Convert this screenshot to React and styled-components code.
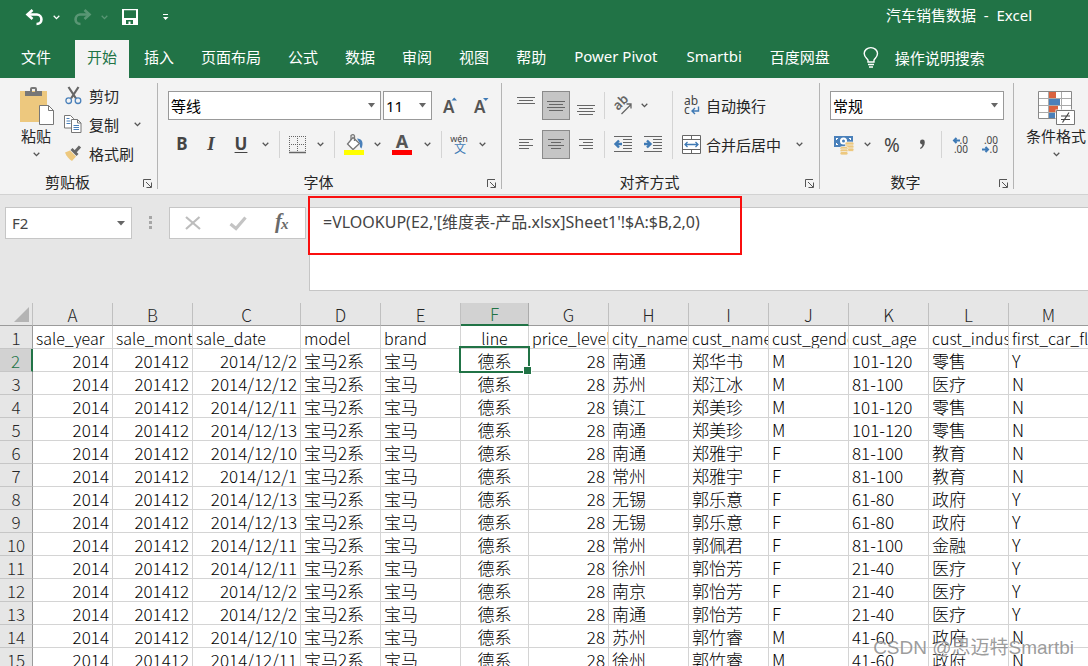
import styled, { createGlobalStyle } from "styled-components";

const GlobalStyle = createGlobalStyle`
  * {
    box-sizing: border-box;
  }
  body {
    margin: 0;
    overflow: hidden;
    background-color: #e6e6e6;
  }
  body, button, input, select, textarea {
    font-family: "Noto Sans", "Noto Sans CJK SC", sans-serif;
    font-size: 15px;
    color: #262626;
  }
  button {
    padding: 0;
    border: none;
    background: none;
  }
  svg {
    display: block;
    flex: none;
    overflow: visible;
  }
`;

const Window = styled.div`
  position: relative;
  display: flex;
  flex-direction: column;
  height: 100vh;
  overflow: hidden;
`;

/* title bar */

const TitleBar = styled.header`
  display: flex;
  align-items: center;
  justify-content: space-between;
  height: 40px;
  padding: 0 56px 8px 24px;
  background-color: #217346;
  color: white;
`;
const QuickAccess = styled.div`
  display: flex;
  align-items: center;
  padding-top: 2px;
`;
const QuickButton = styled.button`
  display: flex;
  align-items: center;
  justify-content: center;
  width: ${(props) => props.$width}px;
  height: 24px;
  color: white;
  opacity: ${(props) => (props.disabled ? 0.25 : 1)};
`;
const Title = styled.h1`
  margin: 0;
  padding-bottom: 2px;
  font-size: 15px;
  font-weight: 400;
  line-height: 20px;
`;

/* ribbon tabs */

const Tabs = styled.nav`
  display: flex;
  gap: 3px;
  height: 38px;
  padding-left: 9px;
  background-color: #217346;
`;
const Tab = styled.button`
  height: 38px;
  padding: 0 ${(props) => (props.$latin ? 13 : 12)}px 6px;
  white-space: nowrap;
  margin-right: ${(props) => (props.$file ? 9 : 0)}px;
  background-color: ${(props) => (props.$active ? "#f3f3f3" : "transparent")};
  color: ${(props) => (props.$active ? "#217346" : "white")};
`;
const TellMe = styled.button`
  display: flex;
  align-items: center;
  gap: 16px;
  padding: 0 18px 3px;
  color: white;
  white-space: nowrap;
`;

/* ribbon */

const Ribbon = styled.div`
  display: flex;
  flex: none;
  height: 117px;
  padding: 5px 0;
  border-bottom: 1px solid #d2d2d2;
  background-color: #f3f3f3;
  overflow: hidden;
`;
const Group = styled.section`
  display: flex;
  flex-direction: column;
  flex: none;
  width: ${(props) => props.$width}px;
  border-right: 1px solid #b4b4b4;
`;
const GroupBody = styled.div`
  display: flex;
  flex-direction: ${(props) => (props.$rows ? "column" : "row")};
  flex: 1;
  gap: ${(props) => (props.$rows ? 10 : 0)}px;
  padding: ${(props) => props.$padding};
`;
const GroupFooter = styled.div`
  display: flex;
  align-items: center;
  height: 16px;
  padding-right: 4px;
`;
const GroupLabel = styled.div`
  flex: 1;
  padding-top: 2px;
  line-height: 16px;
  text-align: center;
`;
const Launcher = styled.button`
  width: 10px;
  height: 10px;
  margin: 6px 0 0 8px;
`;
const Row = styled.div`
  display: flex;
  align-items: center;
  height: ${(props) => (props.$short ? 24 : 29)}px;
  gap: ${(props) => props.$gap || 0}px;
`;
const Separator = styled.div`
  flex: none;
  width: 1px;
  height: ${(props) => (props.$tall ? 68 : 27)}px;
  margin: 0 ${(props) => props.$space || 5}px;
  background-color: #d4d4d4;
`;
const Tool = styled.button`
  display: flex;
  align-items: center;
  justify-content: center;
  flex: none;
  width: ${(props) => props.$width || 28}px;
  height: 29px;
  border: 1px solid ${(props) => (props.$pressed ? "#8a8a8a" : "transparent")};
  background-color: ${(props) => (props.$pressed ? "#c5c5c5" : "transparent")};
  color: #444;
`;
const LetterTool = styled(Tool)`
  font-size: ${(props) => (props.$italic ? 19 : 17)}px;
  font-weight: 700;
  line-height: 24px;
  padding-bottom: 2px;
  font-family: ${(props) => (props.$italic ? '"Liberation Serif", serif' : '"Noto Sans", sans-serif')};
  font-style: ${(props) => (props.$italic ? "italic" : "normal")};
  text-decoration: ${(props) => (props.$underline ? "underline" : "none")};
  text-underline-offset: 2px;
`;
const PercentTool = styled(Tool)`
  font-size: 19px;
`;
const TextTool = styled.button`
  display: flex;
  align-items: center;
  gap: ${(props) => props.$gap || 0}px;
  height: 29px;
  white-space: nowrap;
`;
const BigTool = styled.button`
  display: flex;
  flex-direction: column;
  align-items: center;
  width: ${(props) => props.$width}px;
  padding-top: ${(props) => props.$top || 0}px;
  white-space: nowrap;
  line-height: 20px;
  svg:last-child {
    margin-top: 6px;
  }
`;
const ClipboardList = styled.div`
  display: flex;
  flex-direction: column;
  gap: 5px;
`;
const ToolColumn = styled.div`
  display: flex;
  flex-direction: column;
  gap: 10px;
`;
const SelectBox = styled.div`
  display: flex;
  align-items: center;
  width: ${(props) => props.$width}px;
  height: 29px;
  border: 1px solid #999;
  background-color: white;
  svg {
    margin: 0 5px 0 -12px;
    pointer-events: none;
  }
`;
const Select = styled.select`
  flex: 1;
  min-width: 0;
  height: 27px;
  padding: 0 2px;
  border: none;
  background: none;
  appearance: none;
  color: black;
`;

/* formula bar */

const FormulaBar = styled.div`
  display: flex;
  align-items: flex-start;
  flex: none;
  height: 108px;
  padding: 12px 0 0 5px;
  background-color: #e6e6e6;
`;
const NameBox = styled.div`
  display: flex;
  align-items: center;
  width: 127px;
  height: 32px;
  padding-right: 6px;
  border: 1px solid #c6c6c6;
  background-color: white;
`;
const NameInput = styled.input`
  flex: 1;
  min-width: 0;
  padding: 0 6px;
  border: none;
  background: none;
  color: #444;
`;
const Dots = styled.div`
  display: flex;
  flex-direction: column;
  gap: 2px;
  margin: 9px 17px;
  span {
    width: 3px;
    height: 3px;
    background-color: #a6a6a6;
  }
`;
const FormulaButtons = styled.div`
  display: flex;
  align-items: center;
  width: 137px;
  height: 32px;
  margin-right: 3px;
  border: 1px solid #c6c6c6;
  background-color: white;
`;
const FormulaButton = styled.button`
  display: flex;
  justify-content: center;
  width: 45px;
`;
const FormulaField = styled.div`
  position: relative;
  flex: 1;
  height: 84px;
`;
const FormulaText = styled.textarea`
  display: block;
  width: 100%;
  height: 84px;
  padding: 2px 13px;
  border: 1px solid #c6c6c6;
  border-right: none;
  background-color: white;
  color: #444;
  font-size: 16px;
  line-height: 24px;
  resize: none;
  outline: none;
`;
const Highlight = styled.div`
  position: absolute;
  top: -11px;
  left: -1px;
  width: 434px;
  height: 59px;
  border: 2px solid #fa0f0f;
  pointer-events: none;
`;

/* sheet */

const SheetArea = styled.main`
  flex: 1;
  overflow: hidden;
  background-color: white;
`;
const Sheet = styled.table`
  width: 1089px;
  table-layout: fixed;
  border-collapse: separate;
  border-spacing: 0;
  font-family: "Noto Sans CJK SC", sans-serif;
  font-weight: 300;
  color: black;
`;
const HeadCell = styled.th`
  height: 23px;
  padding: 1px 0 0;
  border-bottom: ${(props) => (props.$active ? "2px solid #217346" : "1px solid #9b9b9b")};
  border-right: 1px solid ${(props) => (props.$active ? "#ababab" : "#c0c0c0")};
  background-color: ${(props) => (props.$active ? "#d2d2d2" : "#e6e6e6")};
  color: ${(props) => (props.$active ? "#217346" : "#262626")};
  font-size: 17px;
  font-weight: 300;
  line-height: 20px;
  svg {
    margin: 0 3px 0 auto;
  }
`;
const RowHead = styled.th`
  height: 23px;
  padding: 2px 0 0;
  border-bottom: 1px solid #c6c6c6;
  border-right: ${(props) => (props.$active ? "2px solid #217346" : "1px solid #9b9b9b")};
  background-color: ${(props) => (props.$active ? "#d2d2d2" : "#e6e6e6")};
  color: ${(props) => (props.$active ? "#217346" : "#262626")};
  font-size: 17px;
  font-weight: 300;
  line-height: 20px;
`;
const Cell = styled.td`
  position: ${(props) => (props.$active ? "relative" : "static")};
  height: 23px;
  padding: 2px 3px 0;
  border-right: 1px solid #d4d4d4;
  border-bottom: 1px solid #d4d4d4;
  overflow: ${(props) => (props.$active ? "visible" : "hidden")};
  font-size: ${(props) => (props.$name ? 16 : 17)}px;
  line-height: 20px;
  text-align: ${(props) => props.$align || "left"};
  white-space: nowrap;
`;
const Cursor = styled.div`
  position: absolute;
  top: -3px;
  left: -2px;
  right: -2px;
  bottom: -2px;
  border: 2px solid #217346;
  &::after {
    content: "";
    position: absolute;
    right: -4px;
    bottom: -4px;
    width: 7px;
    height: 7px;
    border: 1px solid white;
    background-color: #217346;
  }
`;
const Watermark = styled.div`
  position: absolute;
  right: 14px;
  bottom: 5px;
  color: rgba(130, 130, 130, 0.8);
  font-family: "Liberation Sans", "Noto Sans CJK SC", sans-serif;
  font-size: 19px;
  line-height: 26px;
  text-shadow: 1px 1px 0 rgba(255, 255, 255, 0.7);
`;

/* icons */

const Chevron = ({ color = "#555" }) => (
  <svg width="7" height="5" viewBox="0 0 7 5" fill="none" stroke={color} strokeWidth="1.3">
    <path d="M.7.8 3.5 3.6 6.3.8" />
  </svg>
);

const Triangle = ({ size = 7 }) => (
  <svg width={size} height="5" viewBox="0 0 6 4" preserveAspectRatio="none" fill="#666">
    <path d="M0 0h6L3 3.5z" />
  </svg>
);

const UndoIcon = ({ flip }) => (
  <svg width="19" height="17" viewBox="0 0 19 17" fill="none" stroke="currentColor" strokeWidth="2.6">
    <g transform={flip ? "translate(19 0) scale(-1 1)" : undefined}>
      <path d="M7.5 1 2.5 5.5l5 4.5" />
      <path d="M2.5 5.5H12c6 .5 6 9.5-.5 9.5" />
    </g>
  </svg>
);

const SaveIcon = () => (
  <svg width="16" height="16" viewBox="0 0 16 16">
    <path fill="#fff" fillRule="evenodd" d="M0 0h16v16H0zM2 1.300v7.700h12V1.300zM4 11v4h2.500v-2.500h2V15H11v-4z" />
  </svg>
);

const CustomizeIcon = () => (
  <svg width="7" height="8" viewBox="0 0 7 8" fill="#fff">
    <path d="M1 1h5v1H1zM1 4h5.500L3.500 7z" />
  </svg>
);

const BulbIcon = () => (
  <svg width="16" height="21" viewBox="0 0 16 21" fill="none" stroke="#fff" strokeWidth="1.400">
    <path d="M5 15v-2C4 11 1.200 10 1.200 6.500a6.600 5.800 0 0 1 13.300 0C14.500 10 12 11 11 13v2zM5 17.500h6M6 20h4" />
  </svg>
);

const PasteIcon = () => (
  <svg width="36" height="39" viewBox="0 0 36 39">
    <path fill="#edc87e" d="M2 4h27v31H2z" />
    <path fill="#777" d="M7 9V4h5V2q0-2 2-2h3q2 0 2 2v2h5v5zM14 2v3h3V2z" fillRule="evenodd" />
    <path fill="#fff" stroke="#777" d="M21.500 18.500h9l5 5v14h-14z" />
    <path fill="none" stroke="#777" d="M30.500 18.500v5h5" />
  </svg>
);

const CutIcon = () => (
  <svg width="17" height="19" viewBox="0 0 17 19" fill="none">
    <path stroke="#666" strokeWidth="2.200" d="M3.500 1 11 12.500M13.500 1 6 12.500" />
    <g stroke="#4a80ba" strokeWidth="1.300">
      <circle cx="3.700" cy="14.700" r="2.800" />
      <circle cx="13" cy="14.700" r="2.800" />
    </g>
  </svg>
);

const CopyIcon = () => (
  <svg width="18" height="18" viewBox="0 0 18 18">
    <path fill="#fff" stroke="#777" d="M.500.500h6l3 3v9.500h-9z" />
    <path stroke="#4a80ba" d="M2.500 3.500h3M2.500 6h4M2.500 8.500h4" />
    <path fill="#fff" stroke="#777" d="M7.500 4.500h6l3.500 3.500v9.500H7.500z" />
    <path fill="none" stroke="#777" d="M13.500 4.500V8H17" />
    <path stroke="#4a80ba" d="M9.500 10.500h5.500M9.500 12.500h5.500M9.500 14.500h5.500" />
  </svg>
);

const BrushIcon = () => (
  <svg width="18" height="17" viewBox="0 0 18 17">
    <path fill="#edc87e" d="M1 7.500 6 5.500l6 6L8 16C5 14 2.500 11.500 1 7.500z" />
    <path fill="#666" d="m6.500 5 2-2 6 6-2 2z" />
    <path stroke="#666" strokeWidth="3" d="m11 7 5-5.500" />
  </svg>
);

const LauncherIcon = () => (
  <svg width="10" height="10" viewBox="0 0 10 10" fill="none" stroke="#555">
    <path d="M.500 8V.500H8M3 3l5 5M8.500 3.500v5h-5" />
  </svg>
);

const FontSizeIcon = ({ shrink }) => (
  <svg width="14" height="18" viewBox="0 0 14 18">
    <text x="0" y="16" fontSize="17" fontWeight="600" fontFamily="Noto Sans" fill="#555">A</text>
    <path fill="#3f7ab5" d={shrink ? "M9 1h5.500l-2.700 3z" : "M8.500 3.500H14L11.200.5z"} />
  </svg>
);

const BordersIcon = () => (
  <svg width="18" height="18" viewBox="0 0 18 18" fill="none" stroke="#666">
    <path strokeDasharray="1 1" d="M.500 0v17M8.500 0v17M16.500 0v17M0 .500h17M0 8.500h17" />
    <path d="M0 16.500h17" strokeWidth="1.500" />
  </svg>
);

const FillIcon = () => (
  <svg width="21" height="21" viewBox="0 0 21 21">
    <path fill="#fff" stroke="#777" strokeWidth="1.300" d="m9 3.500 6.500 6L9 15.500 3.500 10z" />
    <path fill="none" stroke="#777" strokeWidth="1.300" d="M7 6V1.500q2.500-2 3.500.500v5" />
    <path fill="#4a80ba" d="M13 4.500c5 0 7 4 4.500 10C16 14 15.500 12 16 9.500z" />
    <path fill="#ff0" d="M0 16h20v5H0z" />
  </svg>
);

const FontColorIcon = () => (
  <svg width="21" height="21" viewBox="0 0 21 21">
    <text x="10" y="14" textAnchor="middle" fontSize="18" fontWeight="700" fontFamily="Noto Sans" fill="#555">A</text>
    <path fill="#f00" d="M0 16h20v5H0z" />
  </svg>
);

const PhoneticIcon = () => (
  <svg width="18" height="20" viewBox="0 0 18 20" textAnchor="middle">
    <text x="8" y="7" fontSize="9" fontFamily="Noto Sans" fill="#444">wén</text>
    <text x="9" y="18" fontSize="12" fontFamily="Noto Sans CJK SC" fill="#3f7ab5">文</text>
  </svg>
);

// each line is [inset from the left, length]
const LinesIcon = ({ lines, top = 0 }) => (
  <svg width="18" height="18" viewBox="0 0 18 18" fill="#666">
    {lines.map(([x, width], i) => (
      <rect key={i} x={x} y={top + i * 3} width={width} height="1" />
    ))}
  </svg>
);

const OrientationIcon = () => (
  <svg width="20" height="18" viewBox="0 0 20 18" fill="none">
    <text transform="translate(5 14) rotate(-45)" fontSize="13" fontWeight="600" fontFamily="Noto Sans" fill="#666">ab</text>
    <path stroke="#666" strokeWidth="1.300" d="M8.500 17 18 7.500M13.500 7H18v4.500" />
  </svg>
);

const IndentIcon = ({ outdent }) => (
  <svg width="19" height="17" viewBox="0 0 19 17">
    <path fill="#666" d="M0 0h18v1H0zM0 15h18v1H0zM9 3h9v1H9zM9 6h9v1H9zM9 9h9v1H9zM9 12h9v1H9z" />
    <path
      fill="none"
      stroke="#3f7ab5"
      strokeWidth="2.400"
      d={outdent ? "M8 8H2M5 4.500 1.500 8 5 11.500" : "M0 8h6M3 4.500 6.500 8 3 11.500"}
    />
  </svg>
);

const WrapIcon = () => (
  <svg width="17" height="18" viewBox="0 0 17 18">
    <text x="1" y="8" fontSize="12" fontFamily="Noto Sans" fill="#444">ab</text>
    <text x="1" y="17" fontSize="12" fontFamily="Noto Sans" fill="#444">c</text>
    <path fill="none" stroke="#3f7ab5" strokeWidth="1.400" d="M15.500 9.500v4.500H9M12 11l-3 3 3 3" />
  </svg>
);

const MergeIcon = () => (
  <svg width="19" height="19" viewBox="0 0 19 19" fill="none">
    <path fill="#fff" stroke="#666" d="M.500.500h18v18H.500zM.500 4.500h18M.500 14.500h18M9.500.500v4M9.500 14.500v4" />
    <path stroke="#3f7ab5" strokeWidth="1.300" d="M3 9.500h13M5.500 7 3 9.500 5.500 12M13.500 7 16 9.500 13.500 12" />
  </svg>
);

const MoneyIcon = () => (
  <svg width="20" height="20" viewBox="0 0 20 20">
    <path fill="#4a80ba" d="M0 1h19v11H0z" />
    <path fill="#fff" d="M2 3h2v1H3v1H2zM15 3h2v2h-1V4h-1zM2 8h1v1h1v1H2z" />
    <circle cx="9.500" cy="6" r="3.500" fill="#fff" />
    <circle cx="9.500" cy="6" r="1.500" fill="#4a80ba" />
    <g fill="#edc87e" stroke="#f3f3f3" strokeWidth=".7">
      <rect x="11" y="7" width="9" height="3.500" rx="1.700" />
      <rect x="11" y="10" width="9" height="3.500" rx="1.700" />
      <rect x="11" y="13" width="9" height="3.500" rx="1.700" />
      <rect x="6" y="11.500" width="8" height="3.500" rx="1.700" />
      <rect x="6" y="14" width="8" height="3.500" rx="1.700" />
      <rect x="6" y="16.500" width="8" height="3.500" rx="1.700" />
    </g>
  </svg>
);

const CommaIcon = () => (
  <svg width="7" height="11" viewBox="0 0 7 11">
    <path fill="#555" d="M1 3a2.400 2.400 0 1 1 4.800 0c0 3.500-1.800 5.800-4.300 7L1 9c1.500-1 2.300-2 2.300-3.500C2 5.500 1 4.500 1 3z" />
  </svg>
);

const DecimalIcon = ({ decrease }) => (
  <svg width="17" height="18" viewBox="0 0 17 18" fontSize="10" fontFamily="Noto Sans" fill="#444">
    <text x="15" y="8" textAnchor="end">{decrease ? ".00" : ".0"}</text>
    <text x="15" y="17" textAnchor="end">{decrease ? ".0" : ".00"}</text>
    <path
      fill="none"
      stroke="#3f7ab5"
      strokeWidth="2"
      d={decrease ? "M-1 13.500h6M2.500 11 5 13.500 2.500 16" : "M7 4.500H1M3.500 2 1 4.500 3.500 7"}
    />
  </svg>
);

const ConditionalIcon = () => (
  <svg width="36" height="35" viewBox="0 0 36 35">
    <path fill="#fff" stroke="#888" d="M.500.500h33v27H.500z" />
    <path fill="#d9623f" d="M11 1h7v6h-7zM11 15h9v6h-9z" />
    <path fill="#4a80ba" d="M11 8h11v6H11zM11 22h6v5h-6z" />
    <path stroke="#aaa" fill="none" d="M10.500 1v26M23.500 1v26M1 7.500h32M1 14.500h32M1 21.500h32" />
    <path fill="#fff" stroke="#f3f3f3" strokeWidth="3" d="M19 20h17v14H19z" />
    <path fill="#fff" stroke="#777" d="M18.500 19.500h18v14h-18z" />
    <path stroke="#444" strokeWidth="1.200" d="M23 25h9M23 28.500h9M31 21.500l-6.500 10" />
  </svg>
);

const SelectAllIcon = () => (
  <svg width="15" height="15" viewBox="0 0 15 15">
    <path fill="#b4b4b4" d="M15 0v15H0z" />
  </svg>
);

const CancelIcon = () => (
  <svg width="16" height="14" viewBox="0 0 16 14" fill="none" stroke="#bdbdbd" strokeWidth="2.200">
    <path d="M1 1l14 12M14.500 1 1 13" />
  </svg>
);

const EnterIcon = () => (
  <svg width="18" height="15" viewBox="0 0 18 15" fill="none" stroke="#c4c4c4" strokeWidth="3.200">
    <path d="M1.500 8 7 12.500 16.500 1.500" />
  </svg>
);

const FunctionIcon = () => (
  <svg width="20" height="22" viewBox="0 0 20 22" fontFamily="Liberation Serif" fontStyle="italic" fontWeight="700" fill="#6a6a6a">
    <text x="2" y="16" fontSize="21">f</text>
    <text x="8" y="17" fontSize="15">x</text>
  </svg>
);

const TABS = ["文件", "开始", "插入", "页面布局", "公式", "数据", "审阅", "视图", "帮助", "Power Pivot", "Smartbi", "百度网盘"];

const COLUMNS = [
  { letter: "A", name: "sale_year", width: 80, align: "right" },
  { letter: "B", name: "sale_month", width: 80, align: "right" },
  { letter: "C", name: "sale_date", width: 108, align: "right" },
  { letter: "D", name: "model", width: 80 },
  { letter: "E", name: "brand", width: 80 },
  { letter: "F", name: "line", width: 68, align: "center" },
  { letter: "G", name: "price_level", width: 80, align: "right" },
  { letter: "H", name: "city_name", width: 80 },
  { letter: "I", name: "cust_name", width: 80 },
  { letter: "J", name: "cust_gender", width: 80 },
  { letter: "K", name: "cust_age", width: 80 },
  { letter: "L", name: "cust_industry", width: 80 },
  { letter: "M", name: "first_car_flg", width: 80 },
];

const SALES = [
  ["2014/12/2", "南通", "郑华书", "M", "101-120", "零售", "Y"],
  ["2014/12/12", "苏州", "郑江冰", "M", "81-100", "医疗", "N"],
  ["2014/12/11", "镇江", "郑美珍", "M", "101-120", "零售", "N"],
  ["2014/12/13", "南通", "郑美珍", "M", "101-120", "零售", "N"],
  ["2014/12/10", "南通", "郑雅宇", "F", "81-100", "教育", "N"],
  ["2014/12/1", "常州", "郑雅宇", "F", "81-100", "教育", "N"],
  ["2014/12/13", "无锡", "郭乐意", "F", "61-80", "政府", "Y"],
  ["2014/12/13", "无锡", "郭乐意", "F", "61-80", "政府", "Y"],
  ["2014/12/11", "常州", "郭佩君", "F", "81-100", "金融", "Y"],
  ["2014/12/11", "徐州", "郭怡芳", "F", "21-40", "医疗", "Y"],
  ["2014/12/2", "南京", "郭怡芳", "F", "21-40", "医疗", "Y"],
  ["2014/12/2", "南通", "郭怡芳", "F", "21-40", "医疗", "Y"],
  ["2014/12/10", "苏州", "郭竹睿", "M", "41-60", "政府", "N"],
  ["2014/12/11", "徐州", "郭竹睿", "M", "41-60", "政府", "N"],
].map(([date, ...rest]) => ["2014", "201412", date, "宝马2系", "宝马", "德系", "28", ...rest]);

const Footer = ({ label }) => (
  <GroupFooter>
    <GroupLabel>{label}</GroupLabel>
    <Launcher aria-label={`${label}设置`}>
      <LauncherIcon />
    </Launcher>
  </GroupFooter>
);

const Drop = ({ label, width = 18 }) => (
  <Tool $width={width} aria-label={label}>
    <Chevron />
  </Tool>
);

const Combo = ({ label, value, width }) => (
  <SelectBox $width={width}>
    <Select aria-label={label} defaultValue={value}>
      <option>{value}</option>
    </Select>
    <Triangle />
  </SelectBox>
);

function ClipboardGroup() {
  return (
    <Group $width={158}>
      <GroupBody $padding="0 0 0 15px">
        <BigTool $width={42} $top={4}>
          <PasteIcon />
          <span>粘贴</span>
          <Chevron />
        </BigTool>
        <ClipboardList>
          <Row $short>
            <TextTool>
              <Tool as="span" $width={32}><CutIcon /></Tool>剪切
            </TextTool>
          </Row>
          <Row $short $gap={9}>
            <TextTool>
              <Tool as="span" $width={32}><CopyIcon /></Tool>复制
            </TextTool>
            <Drop label="复制选项" />
          </Row>
          <Row $short>
            <TextTool>
              <Tool as="span" $width={32}><BrushIcon /></Tool>格式刷
            </TextTool>
          </Row>
        </ClipboardList>
      </GroupBody>
      <Footer label="剪贴板" />
    </Group>
  );
}

function FontGroup() {
  return (
    <Group $width={344}>
      <GroupBody $rows $padding="8px 0 0 10px">
        <Row $gap={2}>
          <Combo label="字体" value="等线" width={213} />
          <Combo label="字号" value="11" width={49} />
          <Tool $width={32} aria-label="增大字号"><FontSizeIcon /></Tool>
          <Tool $width={26} aria-label="减小字号"><FontSizeIcon shrink /></Tool>
        </Row>
        <Row>
          <LetterTool $width={28}>B</LetterTool>
          <LetterTool $width={30} $italic>I</LetterTool>
          <LetterTool $width={30} $underline>U</LetterTool>
          <Drop label="下划线选项" />
          <Separator />
          <Tool $width={26} aria-label="边框"><BordersIcon /></Tool>
          <Drop label="边框选项" />
          <Separator />
          <Tool aria-label="填充颜色"><FillIcon /></Tool>
          <Drop label="填充颜色选项" />
          <Tool $width={32} aria-label="字体颜色"><FontColorIcon /></Tool>
          <Drop label="字体颜色选项" />
          <Separator />
          <Tool $width={26} aria-label="拼音"><PhoneticIcon /></Tool>
          <Drop label="拼音选项" />
        </Row>
      </GroupBody>
      <Footer label="字体" />
    </Group>
  );
}

function AlignmentGroup() {
  return (
    <Group $width={318}>
      <GroupBody $padding="8px 0 0 10px">
        <ToolColumn>
          <Row $gap={2}>
            <Tool aria-label="顶端对齐"><LinesIcon top={0} lines={[[0, 18], [2, 14], [0, 18]]} /></Tool>
            <Tool $pressed aria-label="垂直居中"><LinesIcon top={4} lines={[[0, 18], [2, 14], [0, 18], [2, 14]]} /></Tool>
            <Tool aria-label="底端对齐"><LinesIcon top={8} lines={[[0, 18], [2, 14], [0, 18], [2, 14]]} /></Tool>
            <Separator $space={2} />
            <Tool aria-label="方向"><OrientationIcon /></Tool>
            <Drop label="方向选项" width={10} />
          </Row>
          <Row $gap={2}>
            <Tool aria-label="左对齐"><LinesIcon top={3} lines={[[2, 14], [2, 10], [2, 14], [2, 10]]} /></Tool>
            <Tool $pressed aria-label="居中"><LinesIcon top={3} lines={[[1, 16], [4, 10], [1, 16], [4, 10]]} /></Tool>
            <Tool aria-label="右对齐"><LinesIcon top={3} lines={[[2, 14], [6, 10], [2, 14], [6, 10]]} /></Tool>
            <Separator $space={2} />
            <Tool aria-label="减少缩进量"><IndentIcon outdent /></Tool>
            <Tool aria-label="增加缩进量"><IndentIcon /></Tool>
          </Row>
        </ToolColumn>
        <Separator $tall />
        <ToolColumn>
          <TextTool $gap={2}>
            <Tool as="span" $width={26}><WrapIcon /></Tool>自动换行
          </TextTool>
          <Row $gap={9}>
            <TextTool $gap={2}>
              <Tool as="span" $width={26}><MergeIcon /></Tool>合并后居中
            </TextTool>
            <Drop label="合并选项" />
          </Row>
        </ToolColumn>
      </GroupBody>
      <Footer label="对齐方式" />
    </Group>
  );
}

function NumberGroup() {
  return (
    <Group $width={194}>
      <GroupBody $rows $padding="8px 0 0 10px">
        <Combo label="数字格式" value="常规" width={174} />
        <Row>
          <Tool aria-label="会计数字格式"><MoneyIcon /></Tool>
          <Drop label="会计格式选项" />
          <PercentTool $width={32}>%</PercentTool>
          <Tool aria-label="千位分隔样式"><CommaIcon /></Tool>
          <Separator />
          <Tool aria-label="增加小数位数"><DecimalIcon /></Tool>
          <Tool $width={32} aria-label="减少小数位数"><DecimalIcon decrease /></Tool>
        </Row>
      </GroupBody>
      <Footer label="数字" />
    </Group>
  );
}

export default function App() {
  return (
    <Window>
      <GlobalStyle />
      <TitleBar>
        <QuickAccess>
          <QuickButton $width={20} aria-label="撤消"><UndoIcon /></QuickButton>
          <QuickButton $width={24} aria-label="撤消选项"><Chevron color="white" /></QuickButton>
          <QuickButton $width={28} disabled aria-label="恢复"><UndoIcon flip /></QuickButton>
          <QuickButton $width={16} disabled aria-label="恢复选项"><Chevron color="white" /></QuickButton>
          <QuickButton $width={36} aria-label="保存"><SaveIcon /></QuickButton>
          <QuickButton $width={34} aria-label="自定义快速访问工具栏"><CustomizeIcon /></QuickButton>
        </QuickAccess>
        <Title>汽车销售数据&nbsp; - &nbsp;Excel</Title>
      </TitleBar>
      <Tabs>
        {TABS.map((tab) => (
          <Tab key={tab} $file={tab === "文件"} $active={tab === "开始"} $latin={/^[A-Z]/.test(tab)}>
            {tab}
          </Tab>
        ))}
        <TellMe>
          <BulbIcon />
          操作说明搜索
        </TellMe>
      </Tabs>
      <Ribbon>
        <ClipboardGroup />
        <FontGroup />
        <AlignmentGroup />
        <NumberGroup />
        <GroupBody $padding="8px 0 0 11px">
          <BigTool $width={62}>
            <ConditionalIcon />
            <span>条件格式</span>
            <Chevron />
          </BigTool>
        </GroupBody>
      </Ribbon>
      <FormulaBar>
        <NameBox>
          <NameInput aria-label="名称框" defaultValue="F2" />
          <button aria-label="名称列表"><Triangle size={8} /></button>
        </NameBox>
        <Dots>
          <span />
          <span />
          <span />
        </Dots>
        <FormulaButtons>
          <FormulaButton aria-label="取消"><CancelIcon /></FormulaButton>
          <FormulaButton aria-label="输入"><EnterIcon /></FormulaButton>
          <FormulaButton aria-label="插入函数"><FunctionIcon /></FormulaButton>
        </FormulaButtons>
        <FormulaField>
          <FormulaText
            aria-label="编辑栏"
            spellCheck={false}
            defaultValue="=VLOOKUP(E2,'[维度表-产品.xlsx]Sheet1'!$A:$B,2,0)"
          />
          <Highlight />
        </FormulaField>
      </FormulaBar>
      <SheetArea>
        <Sheet>
          <colgroup>
            <col width="33" />
            {COLUMNS.map((column) => (
              <col key={column.letter} width={column.width} />
            ))}
          </colgroup>
          <thead>
            <tr>
              <HeadCell aria-label="全选"><SelectAllIcon /></HeadCell>
              {COLUMNS.map(({ letter }) => (
                <HeadCell key={letter} scope="col" $active={letter === "F"}>
                  {letter}
                </HeadCell>
              ))}
            </tr>
          </thead>
          <tbody>
            <tr>
              <RowHead scope="row">1</RowHead>
              {COLUMNS.map(({ name, align }) => (
                <Cell key={name} $name $align={align === "center" ? "center" : "left"}>
                  {name}
                </Cell>
              ))}
            </tr>
            {SALES.map((sale, i) => (
              <tr key={i}>
                <RowHead scope="row" $active={i === 0}>{i + 2}</RowHead>
                {sale.map((value, j) => {
                  const active = i === 0 && COLUMNS[j].letter === "F";
                  return (
                    <Cell key={j} $align={COLUMNS[j].align} $active={active}>
                      {value}
                      {active && <Cursor />}
                    </Cell>
                  );
                })}
              </tr>
            ))}
          </tbody>
        </Sheet>
      </SheetArea>
      <Watermark>CSDN @思迈特Smartbi</Watermark>
    </Window>
  );
}
